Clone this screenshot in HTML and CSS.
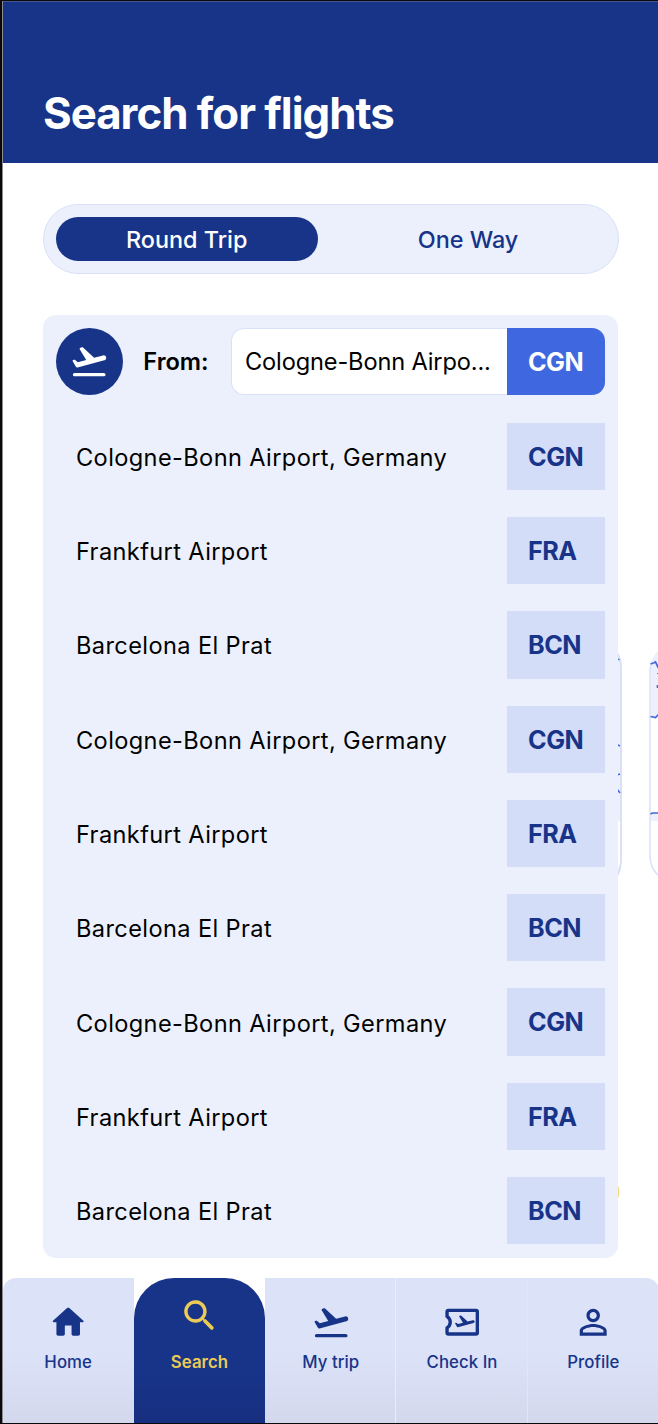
FILE: index.html
```html
<!DOCTYPE html>
<html lang="en">
<head>
<meta charset="utf-8">
<title>Search for flights</title>
<link rel="stylesheet" href="styles.css">
</head>
<body>
<svg class="defs" aria-hidden="true">
  <symbol id="takeoff" viewBox="0 0 24 24">
    <path d="M3.3 19h17.4a.9.9 0 0 1 0 2H3.3a.9.9 0 0 1 0-2z"/>
    <path d="M22.07 9.64c-.21-.8-1.04-1.28-1.84-1.06L14.92 10l-6.4-6c-.3-.27-.6-.32-.95-.23l-.7.19c-.55.15-.7.55-.42 1.05l3.78 6.24-4.97 1.33-1.6-1.25c-.2-.15-.4-.18-.62-.12l-.55.15c-.35.1-.45.35-.28.66l1.9 3.3c.2.35.55.5.95.4l15.94-4.23c.81-.23 1.28-1.05 1.07-1.85z"/>
  </symbol>
</svg>
<div class="screen">
  <header class="header"><h1 class="title">Search for flights</h1></header>
  <main class="main">
    <div class="peek" aria-hidden="true">
      <svg class="peek-art" viewBox="0 0 58 250">
        <path d="M-10 11 H8 Q21 11 21 29 V219 Q21 241 8 241 H-10" fill="#ecf0fc" stroke="#d9e0f7" stroke-width="2"/>
        <path d="M18 182h2v42l-2 6z" fill="#fff"/>
        <path d="M18 20l1.5 1M18 106l2 1M17 136l3-1M17 150l3 4" stroke="#4168df" stroke-width="1.5"/>
        <path d="M70 9 Q50 14 50 34 V216 Q50 236 70 243" fill="#fff" stroke="#d9e0f7" stroke-width="1.5"/>
        <path d="M51 29C52 18 56 13 60 11V78H51zM51 174h9v8h-9z" fill="#ecf0fc"/>
        <path d="M50.5 25l3-1 2-1 3 6M50.5 77.5l5 1 3-3M50.5 175l2-1h6M58 34v1M57.5 46v3" fill="none" stroke="#4168df" stroke-width="1.7"/>
      </svg>
    </div>
    <div class="peek-dot" aria-hidden="true"></div>
    <div class="segmented">
      <button class="segment segment-on">Round Trip</button>
      <button class="segment">One Way</button>
    </div>
    <section class="panel">
      <div class="from">
        <span class="from-icon"><svg class="icon"><use href="#takeoff"/></svg></span>
        <span class="from-label">From:</span>
        <span class="field">Cologne-Bonn Airpo...</span>
        <span class="code code-main">CGN</span>
      </div>
      <div class="option"><span class="name">Cologne-Bonn Airport, Germany</span><span class="code">CGN</span></div>
      <div class="option"><span class="name">Frankfurt Airport</span><span class="code">FRA</span></div>
      <div class="option"><span class="name">Barcelona El Prat</span><span class="code">BCN</span></div>
      <div class="option"><span class="name">Cologne-Bonn Airport, Germany</span><span class="code">CGN</span></div>
      <div class="option"><span class="name">Frankfurt Airport</span><span class="code">FRA</span></div>
      <div class="option"><span class="name">Barcelona El Prat</span><span class="code">BCN</span></div>
      <div class="option"><span class="name">Cologne-Bonn Airport, Germany</span><span class="code">CGN</span></div>
      <div class="option"><span class="name">Frankfurt Airport</span><span class="code">FRA</span></div>
      <div class="option"><span class="name">Barcelona El Prat</span><span class="code">BCN</span></div>
    </section>
  </main>
  <nav class="nav">
    <a class="tab">
      <svg class="icon" viewBox="0 0 24 24"><path d="M10 19v-5h4v5c0 .55.45 1 1 1h3c.55 0 1-.45 1-1v-7h1.7c.46 0 .68-.57.33-.87L12.67 3.6c-.38-.34-.96-.34-1.34 0l-8.36 7.53c-.34.3-.13.87.33.87H5v7c0 .55.45 1 1 1h3c.55 0 1-.45 1-1z"/></svg>
      <span>Home</span>
    </a>
    <a class="tab tab-on">
      <svg class="icon icon-search" viewBox="0 0 24 24"><path d="M15.5 14h-.79l-.28-.27c1.2-1.4 1.82-3.31 1.48-5.34-.47-2.78-2.79-5-5.59-5.34-4.23-.52-7.79 3.04-7.27 7.27.34 2.8 2.56 5.12 5.34 5.59 2.03.34 3.94-.28 5.34-1.48l.27.28v.79l4.25 4.25c.41.41 1.08.41 1.49 0 .41-.41.41-1.08 0-1.49L15.5 14zm-6 0C7.01 14 5 11.99 5 9.5S7.01 5 9.5 5 14 7.01 14 9.5 11.99 14 9.5 14z"/></svg>
      <span>Search</span>
    </a>
    <a class="tab">
      <svg class="icon"><use href="#takeoff"/></svg>
      <span>My trip</span>
    </a>
    <a class="tab tab-line">
      <svg class="icon" viewBox="0 0 24 24"><path d="M3 8.6V5.8Q3 5 3.8 5H20.2Q21 5 21 5.8V18.2Q21 19 20.2 19H3.8Q3 19 3 18.2V15.4Q4.9 14 4.9 12T3 8.6z" fill="none" stroke="currentColor" stroke-width="2" stroke-linejoin="round"/><svg x="6.5" y="5.8" width="14" height="14" viewBox="0 0 24 24"><path d="M22.07 9.64c-.21-.8-1.04-1.28-1.84-1.06L14.92 10l-6.4-6c-.3-.27-.6-.32-.95-.23l-.7.19c-.55.15-.7.55-.42 1.05l3.78 6.24-4.97 1.33-1.6-1.25c-.2-.15-.4-.18-.62-.12l-.55.15c-.35.1-.45.35-.28.66l1.9 3.3c.2.35.55.5.95.4l15.94-4.23c.81-.23 1.28-1.05 1.07-1.85z"/></svg></svg>
      <span>Check In</span>
    </a>
    <a class="tab tab-faint">
      <svg class="icon" viewBox="0 0 24 24"><path d="M12 5.9c1.16 0 2.1.94 2.1 2.1s-.94 2.1-2.1 2.1S9.9 9.16 9.9 8s.94-2.1 2.1-2.1m0 9c2.97 0 6.1 1.46 6.1 2.1v1.1H5.9V17c0-.64 3.13-2.1 6.1-2.1M12 4C9.79 4 8 5.79 8 8s1.79 4 4 4 4-1.79 4-4-1.79-4-4-4zm0 9c-2.67 0-8 1.34-8 4v3h16v-3c0-2.66-5.33-4-8-4z"/></svg>
      <span>Profile</span>
    </a>
  </nav>
</div>
</body>
</html>
```

FILE: styles.css
```css
* { box-sizing: border-box; }

body {
  margin: 0;
  padding: 1px 0 1px 2px;
  height: 1424px;
  overflow: hidden;
  background: #0a0a0c;
  font-family: Inter, "Liberation Sans", sans-serif;
  color: #000;
}

.defs { position: absolute; width: 0; height: 0; }

.screen {
  display: flex;
  flex-direction: column;
  height: 1422px;
  overflow: hidden;
  background: #fff;
  border-left: 1px solid #8b8b8f;
}

.header {
  height: 162px;
  padding: 88px 40px 0;
  background: #173489;
  border-top: 1px solid #45578f;
  margin-left: -1px;
  border-left: 1px solid #45578f;
}

.title {
  margin: 0;
  font-size: 43.8px;
  line-height: 48px;
  font-weight: 700;
  letter-spacing: -1px;
  color: #fff;
}

.main {
  position: relative;
  display: flex;
  flex-direction: column;
  flex: 1;
  padding: 41px 39px 0 40px;
}

.segmented {
  display: grid;
  grid-template-columns: 261.5px 262px;
  gap: 19.5px;
  width: 576px;
  height: 70px;
  padding: 12px;
  background: #ecf0fc;
  border: 1.5px solid #d9e1f9;
  border-radius: 35px;
}

.segment {
  height: 44px;
  padding: 0;
  border: 0;
  border-radius: 22px;
  background: none;
  font: 500 23.4px/45px Inter, "Liberation Sans", sans-serif;
  color: #173489;
}

.segment-on { background: #173489; color: #fff; }

.panel {
  position: relative;
  display: flex;
  flex-direction: column;
  gap: 27px;
  width: 575px;
  height: 942.5px;
  margin-top: 41px;
  padding: 12.5px 13px;
  background: #ecf0fc;
  border-radius: 13px;
}

.from { display: flex; align-items: center; height: 67.33px; margin-bottom: 0.7px; }

.from-icon {
  display: grid;
  place-items: center;
  width: 67.3px;
  height: 67.3px;
  border-radius: 50%;
  background: #173489;
  color: #fff;
}

.from-label {
  width: 87.7px;
  margin-left: 20px;
  font-size: 23.6px;
  font-weight: 600;
}

.field {
  width: 276px;
  height: 67.3px;
  padding-left: 13px;
  border: 1.5px solid #d9e1f9;
  border-right: 0;
  border-radius: 13px 0 0 13px;
  background: #fff;
  font-size: 23.6px;
  line-height: 66px;
  letter-spacing: -0.14px;
  white-space: nowrap;
}

.code {
  width: 98px;
  height: 67.33px;
  padding-left: 21px;
  background: #d4ddf8;
  font-size: 25.2px;
  line-height: 69px;
  font-weight: 700;
  letter-spacing: -0.5px;
  color: #173489;
}

.code-main { background: #3f68e0; border-radius: 0 13px 13px 0; color: #fff; }

.option { display: flex; justify-content: space-between; align-items: center; height: 67.33px; }

.name { padding: 2px 0 0 20px; font-size: 23.6px; letter-spacing: 0.38px; }

.peek { position: absolute; right: 0; top: 476px; width: 58px; height: 250px; }
.peek-art { display: block; width: 58px; height: 250px; }
.peek-dot {
  position: absolute;
  left: 594px;
  top: 1016px;
  width: 22px;
  height: 26px;
  border-radius: 11px;
  background: #f0d779;
}

.icon { display: block; width: 40.4px; height: 40.4px; fill: currentColor; }

.nav {
  display: grid;
  grid-template-columns: repeat(5, 131.3px);
  height: 145px;
  margin-left: -0.5px;
  background: #fff;
}

.tab {
  display: flex;
  flex-direction: column;
  align-items: center;
  gap: 9px;
  padding-top: 24px;
  background: linear-gradient(#dce2f8 50%, #d3d8ed);
  font-size: 16.8px;
  line-height: 22px;
  font-weight: 500;
  letter-spacing: 0.05px;
  color: #173489;
}

.tab:first-child { border-top-left-radius: 13px; }
.tab:last-child { border-top-right-radius: 13px; }
.tab-line { box-shadow: -1px 0 #e9edfb; }
.tab-faint { box-shadow: -1px 0 #e0e5f9; }

.tab-on {
  padding-top: 17px;
  gap: 14.5px;
  border-radius: 40px 40px 0 0;
  background: linear-gradient(#173489 60%, #172f80);
  font-weight: 600;
  color: #ebcb55;
}

.icon-search { width: 41.5px; height: 41.5px; }
```
